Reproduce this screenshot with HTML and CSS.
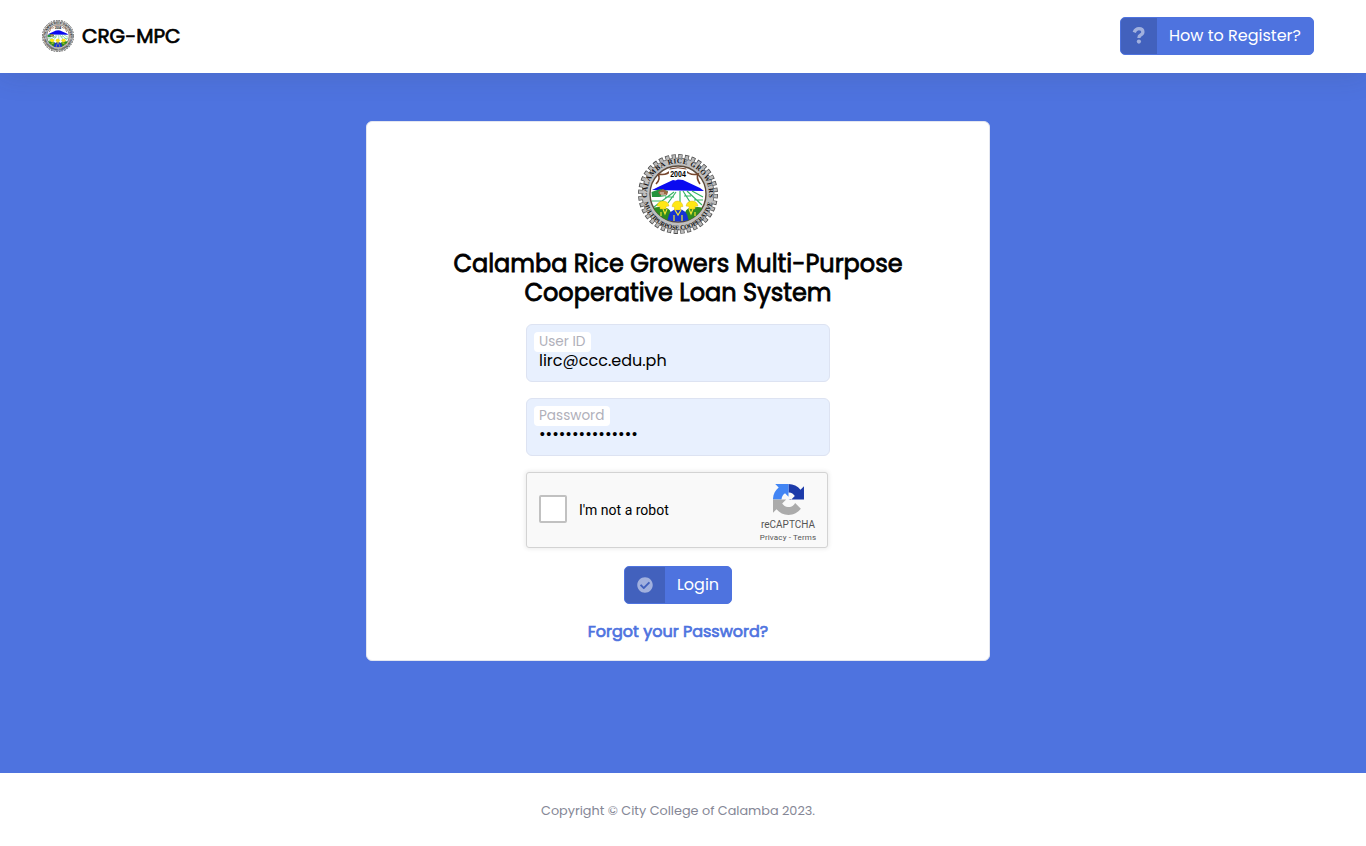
FILE: index.html
```html
<!DOCTYPE html>
<html lang="en">
<head>
<meta charset="utf-8">
<title>CRG-MPC</title>
<link rel="stylesheet" href="styles.css">
</head>
<body>
<header class="topbar">
  <a class="brand"><svg class="brand-logo" viewBox="0 0 80 80" aria-hidden="true"><use href="#seal-art"/></svg><span>CRG-MPC</span></a>
  <a class="btn btn-help">
    <span class="btn-icon"><svg width="14" height="18" viewBox="0 0 14 18"><path d="M2.200 5.300Q3.700 1.700 6.900 1.700Q10.900 1.700 10.900 5Q10.900 6.900 8.700 8Q6.900 8.900 6.900 10.900" fill="none" stroke="currentColor" stroke-width="3.300"/><circle cx="6.900" cy="14.600" r="2.100" fill="currentColor"/></svg></span>
    <span class="btn-label">How to Register?</span>
  </a>
</header>

<main class="stage">
  <form class="card">
    <svg class="card-logo" viewBox="0 0 80 80">
      <defs>
        <path id="arc-top" d="M12.500 54.500A31 31 0 1 1 67.500 54.500"/>
        <path id="arc-bottom" d="M5.200 41A34.800 34.800 0 0 0 74.800 41"/>
      </defs>
      <g id="seal-art">
        <circle cx="40" cy="40" r="37.600" fill="none" stroke="#4a4a4a" stroke-width="4.600" stroke-dasharray="4.200 2.362"/>
        <circle cx="40" cy="40" r="36" fill="#bfbfbf" stroke="#666" stroke-width=".9"/>
        <circle cx="40" cy="40" r="37" fill="none" stroke="#b9b9b9" stroke-width="4.200" stroke-dasharray="2.900 3.558" stroke-dashoffset="-.6"/>
        <circle cx="40" cy="40" r="28" fill="#fff" stroke="#5b4a3a" stroke-width="1.400"/>
        <path d="M14 36 20 33 35 26 37.500 26.500 40 25.500 45 26 62 34 66 37Z" fill="#0a0af0"/>
        <path d="M13.500 38 22 35 30 37 28 42 21 43 14 43Z" fill="#24933b"/>
        <path d="M20 38 25 35 30 38 29 41H22Z" fill="#9a6842"/>
        <path d="M22 39h4M23 41h5" stroke="#fff" stroke-width=".8"/>
        <path d="M36 38 16 53M38 38 30 49M42 37V48M45 37 52 48M49 37 64 51M54 37 65 43M14 47H24M27 43H36M46 42H53M56 46H65" fill="none" stroke="#36b565" stroke-width="1.200"/>
        <path d="M20 20Q29 22 33 16H47Q52 22 60 20Q58 24 62 30M20 20Q23 25 18 30" fill="none" stroke="#77462c" stroke-width="1.600"/>
        <rect x="31" y="14" width="18" height="9.500" fill="#fff"/>
        <path d="M31.500 15Q40 12.500 48.500 15" fill="none" stroke="#77462c"/>
        <text class="seal-year" x="32.200" y="22.500" textLength="15.600" lengthAdjust="spacingAndGlyphs">2004</text>
        <path d="M15.500 54Q20 52 26 54Q33 53 34 63L32 67Q20 63 15.500 54Z" fill="#2e8b20"/>
        <path d="M64.500 54Q60 52 54 54Q47 53 46 63L48 67Q60 63 64.500 54Z" fill="#2e8b20"/>
        <path d="M29.500 66Q31 55 40 55Q49 55 50.500 66Q40 69 29.500 66Z" fill="#1632d4"/>
        <path d="M25 55 27 60 29 55M51 55 53 60 55 55M37 56 40 61 43 56M36 61V67M44 61V67M23 58V62M57 58V62" fill="none" stroke="#efe330" stroke-width="1.200"/>
        <g fill="#ffe813" stroke="#d5ad0b" stroke-width=".4">
          <path d="M19 52Q20 47 25 47Q30 47 31 52L28 52.500V55H22V52.500Z"/>
          <path d="M34 52.500Q35 47 39.500 47Q44 47 45 52.500L42.500 53V56H36.500V53Z"/>
          <path d="M48 52Q49 47 54 47Q59 47 60 52L57 52.500V55H51V52.500Z"/>
        </g>
        <text class="seal-text"><textPath href="#arc-top" startOffset="50%" text-anchor="middle" textLength="104">CALAMBA RICE GROWERS</textPath></text>
        <text class="seal-text seal-lower"><textPath href="#arc-bottom" startOffset="50%" text-anchor="middle" textLength="94">MULTIPURPOSE COOPERATIVE</textPath></text>
      </g>
    </svg>
    <h1 class="title">Calamba Rice Growers Multi-Purpose<br>Cooperative Loan System</h1>
    <div class="field">
      <label class="user-label" for="user">User ID</label>
      <input class="user-input" id="user" type="text" value="lirc@ccc.edu.ph">
    </div>
    <div class="field">
      <label class="pass-label" for="pass">Password</label>
      <input class="pass-input" id="pass" type="password" value="xxxxxxxxxxxxxxx">
    </div>
    <div class="captcha">
      <span class="captcha-box"></span>
      <span class="captcha-text">I'm not a robot</span>
      <div class="captcha-brand">
        <svg width="31" height="31" viewBox="0 0 64 64">
          <path fill="#1c3aa9" d="M64 31.955c-.001-.46-.012-.918-.033-1.373V4.638l-7.173 7.173C50.923 4.625 41.997.039 32 .039V17.600c.49 0 .868.057 1.146.165 5.025.397 9.380 3.170 11.945 7.194l-8.322 8.322-4.769-1.300C42 32 59.200 31.956 64 31.955"/>
          <path fill="#4285f4" d="M31.862.094c-.46.001-.918.012-1.373.033H4.545L11.718 7.300C4.532 13.171-.054 22.097-.054 32.094H17.500c0-.49.057-.868.165-1.146.397-5.025 3.170-9.380 7.194-11.945l7.141 7.141V.094"/>
          <path fill="#ababab" d="M.001 32.045c.001.460.012.918.033 1.373v25.944l7.173-7.173c5.871 7.186 14.797 11.772 24.794 11.772 10.404 0 19.646-4.966 25.504-12.656L45.748 39.424c-1.152 2.131-2.789 3.961-4.753 5.337-2.043 1.594-4.938 2.898-8.994 2.898-.49 0-.868-.057-1.146-.165-5.025-.397-9.380-3.170-11.945-7.194l8.322-8.322c-10.541.041-22.448.066-27.231.067"/>
        </svg>
        <span class="captcha-name">reCAPTCHA</span>
        <span class="captcha-links">Privacy - Terms</span>
      </div>
    </div>
    <button class="btn btn-login" type="button">
      <span class="btn-icon"><svg width="16" height="16" viewBox="0 0 512 512"><path fill="currentColor" d="M504 256c0 136.967-111.033 248-248 248S8 392.967 8 256 119.033 8 256 8s248 111.033 248 248zM227.314 387.314l184-184c6.248-6.248 6.248-16.379 0-22.627l-22.627-22.627c-6.248-6.249-16.379-6.249-22.628 0L216 308.118l-70.059-70.059c-6.248-6.248-16.379-6.248-22.628 0l-22.627 22.627c-6.248 6.248-6.248 16.379 0 22.627l104 104c6.249 6.249 16.379 6.249 22.628.001z"/></svg></span>
      <span class="btn-label">Login</span>
    </button>
    <a class="forgot">Forgot your Password?</a>
  </form>
</main>

<footer class="footer">Copyright © City College of Calamba 2023.</footer>
</body>
</html>
```
FILE: styles.css
```css
* { box-sizing: border-box; }
body {
  margin: 0;
  height: 846px;
  display: flex;
  flex-direction: column;
  overflow: hidden;
  background: #fff;
  color: #000;
  font-family: Poppins, Inter, "Open Sans", sans-serif;
  font-size: 16px;
}
.seal-year { font: bold 9px "Liberation Sans", sans-serif; }
.seal-text { font: bold 7px "Liberation Serif", serif; fill: #111; }
.seal-lower { font-size: 6.200px; }
.topbar {
  position: relative;
  height: 73px;
  flex: none;
  display: flex;
  justify-content: space-between;
  align-items: flex-start;
  padding: 17px 52px 0 42px;
  background: #fff;
  box-shadow: 0 2px 28px rgba(58, 59, 69, .15);
}
.brand {
  display: flex;
  align-items: center;
  gap: 8px;
  height: 38px;
  font-size: 20px;
  -webkit-text-stroke: .7px currentColor;
}
.brand-logo { width: 32px; height: 32px; -webkit-text-stroke: 0; }
.btn {
  display: flex;
  height: 38px;
  padding: 0;
  border: 1px solid #4e73df;
  border-radius: 5px;
  overflow: hidden;
  background: #4e73df;
  color: #fff;
  font: inherit;
}
.btn-help { width: 194px; }
.btn-login { width: 108px; margin-top: 18px; flex: none; }
.btn-icon {
  display: flex;
  align-items: center;
  justify-content: center;
  width: 36px;
  height: 100%;
  background: rgba(0, 0, 0, .15);
  color: rgba(255, 255, 255, .5);
}
.btn-login .btn-icon { width: 40px; padding-bottom: 1px; }
.btn-label {
  flex: 1;
  text-align: center;
  line-height: 36px;
  white-space: nowrap;
}
.stage {
  height: 700px;
  flex: none;
  padding: 48px 10px 0 0;
  background: #4e73df;
}
.card {
  display: flex;
  flex-direction: column;
  align-items: center;
  width: 624px;
  height: 540px;
  margin: 0 auto;
  padding-top: 32px;
  border: 1px solid #e3e6f0;
  border-radius: 6px;
  background: #fff;
}
.card-logo { width: 80px; height: 80px; flex: none; }
.title {
  margin: 15px 0 17px;
  font-size: 24px;
  line-height: 29px;
  font-weight: 400;
  text-align: center;
  white-space: nowrap;
  -webkit-text-stroke: .8px currentColor;
}
.field {
  width: 304px;
  height: 58px;
  flex: none;
  margin-bottom: 16px;
  padding: 7px;
  border: 1px solid #dde3f2;
  border-radius: 6px;
  background: #e8f0fe;
}
.field label {
  display: block;
  height: 20px;
  padding: 0 5px;
  border-radius: 4px;
  background: #fff;
  color: #b0b0ba;
  font-size: 13.600px;
  line-height: 19px;
  white-space: nowrap;
}
.user-label { width: 57px; }
.pass-label { width: 76px; }
.field input {
  display: block;
  width: 280px;
  height: 20px;
  margin: -2px 0 0;
  padding: 0 5px;
  border: 0;
  outline: 0;
  background: transparent;
  color: #000;
  font: inherit;
}
.field .pass-input { margin-top: -3px; }
.captcha {
  display: flex;
  align-items: center;
  width: 302px;
  height: 76px;
  flex: none;
  align-self: flex-start;
  margin-left: 159px;
  padding-left: 12px;
  border: 1px solid #d3d3d3;
  border-radius: 3px;
  background: #f9f9f9;
  box-shadow: 0 0 4px 1px rgba(0, 0, 0, .08);
  font-family: Roboto, sans-serif;
}
.captcha-box {
  width: 28px;
  height: 28px;
  margin-top: -2px;
  border: 2px solid #c1c1c1;
  border-radius: 2px;
  background: #fff;
}
.captcha-text { margin-left: 12px; font-size: 14px; }
.captcha-brand {
  display: flex;
  flex-direction: column;
  align-items: center;
  width: 70px;
  height: 74px;
  margin: 0 4px 0 auto;
  padding-top: 11px;
  color: #555;
}
.captcha-name { font-size: 10px; line-height: 10px; margin-top: 5px; }
.captcha-links { font-size: 8px; line-height: 10px; margin-top: 3px; letter-spacing: .15px; }
.forgot {
  margin-top: 16px;
  color: #4e73df;
  line-height: 24px;
  -webkit-text-stroke: .7px currentColor;
}
.footer {
  padding: 28px 10px 0 0;
  color: #858796;
  font-size: 12.800px;
  line-height: 19px;
  text-align: center;
}
```
